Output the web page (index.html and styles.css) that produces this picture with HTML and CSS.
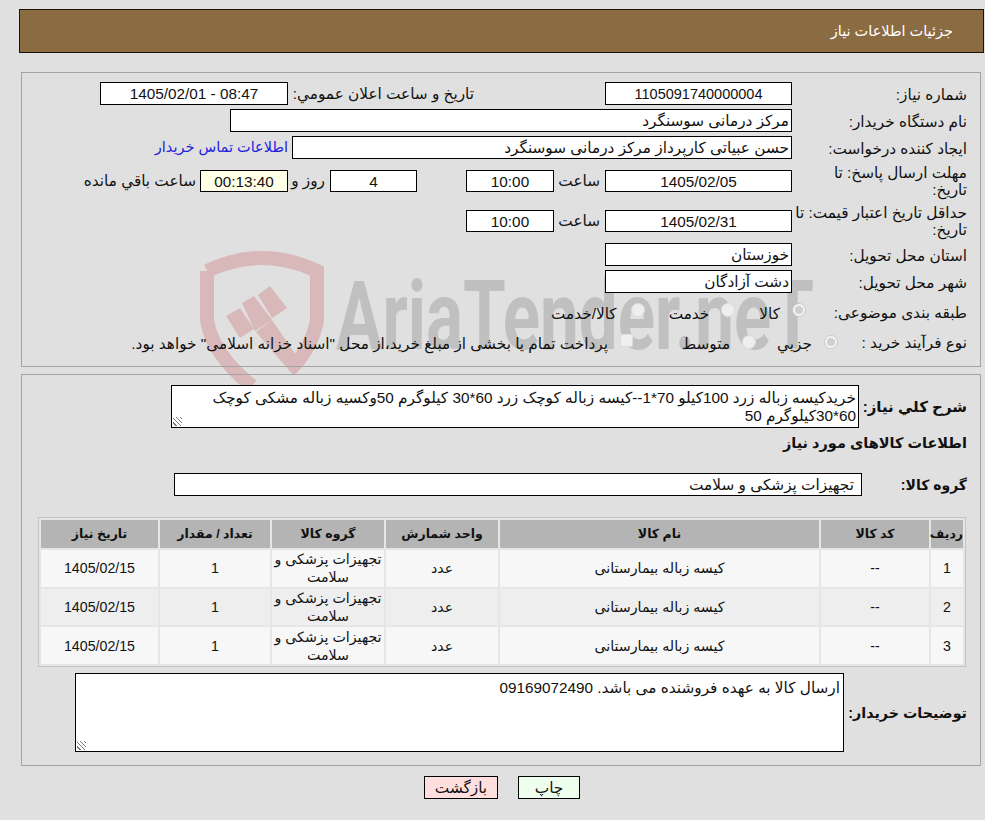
FILE: index.html
```html
<!DOCTYPE html>
<html lang="fa" dir="rtl">
<head>
<meta charset="utf-8">
<title>جزئیات اطلاعات نیاز</title>
<link rel="stylesheet" href="styles.css">
</head>
<body>
<div class="page">
  <div class="watermark" aria-hidden="true">
    <svg class="shield" viewBox="0 0 124 140" width="124" height="140">
      <path class="sh-line" d="M7 21 Q62 -5 117 21 L117 70 Q112 98 90 120"/>
      <path class="sh-line" d="M7 21 L7 70 Q12 104 52 136"/>
      <path class="sh-fill" d="M26 66 L40 58 L54 79 L40 88 Z M42 53 L54 46 L72 70 L55 81 Z M58 45 L70 36 L87 58 L72 68 Z M72 70 L98 108 L93 125 L56 82 Z"/>
    </svg>
    <span class="wm-text">AriaTender.neT</span>
  </div>

  <header class="title-bar">جزئیات اطلاعات نیاز</header>

  <section class="panel panel-top">
    <div class="row">
      <div class="label">شماره نیاز:</div>
      <div class="field f-date center num">1105091740000004</div>
      <div class="label-inline l-announce">تاریخ و ساعت اعلان عمومي:</div>
      <div class="field f-date f-wide center">08:47 - 1405/02/01</div>
    </div>
    <div class="row">
      <div class="label">نام دستگاه خریدار:</div>
      <div class="field f-buyer">مرکز درمانی سوسنگرد</div>
    </div>
    <div class="row">
      <div class="label">ایجاد کننده درخواست:</div>
      <div class="field f-creator">حسن عبیاتی کارپرداز مرکز درمانی سوسنگرد</div>
      <a class="contact" href="#">اطلاعات تماس خریدار</a>
    </div>
    <div class="row row-tall">
      <div class="label">مهلت ارسال پاسخ: تا<br>تاریخ:</div>
      <div class="field f-date center">1405/02/05</div>
      <div class="label-inline l-hour">ساعت</div>
      <div class="field f-small center">10:00</div>
      <div class="field f-small center f-days">4</div>
      <div class="label-inline l-day">روز و</div>
      <div class="field f-small center f-timer">00:13:40</div>
      <div class="label-inline l-left">ساعت باقي مانده</div>
    </div>
    <div class="row row-tall">
      <div class="label">حداقل تاریخ اعتبار قیمت: تا<br>تاریخ:</div>
      <div class="field f-date center">1405/02/31</div>
      <div class="label-inline l-hour">ساعت</div>
      <div class="field f-small center">10:00</div>
    </div>
    <div class="row">
      <div class="label">استان محل تحویل:</div>
      <div class="field f-date">خوزستان</div>
    </div>
    <div class="row">
      <div class="label">شهر محل تحویل:</div>
      <div class="field f-date">دشت آزادگان</div>
    </div>
    <div class="row row-radio">
      <div class="label">طبقه بندی موضوعی:</div>
      <div class="radios radios-cat">
        <span class="radio on"></span><span class="r-text">کالا</span>
        <span class="radio"></span><span class="r-text">خدمت</span>
        <span class="radio"></span><span class="r-text r-cat-last">کالا/خدمت</span>
      </div>
    </div>
    <div class="row row-radio">
      <div class="label">نوع فرآیند خرید :</div>
      <div class="radios radios-proc">
        <span class="radio on"></span><span class="r-text">جزیي</span>
        <span class="radio"></span><span class="r-text">متوسط</span>
        <span class="check"></span>
        <span class="r-text r-last">پرداخت تمام یا بخشی از مبلغ خرید،از محل "اسناد خزانه اسلامی" خواهد بود.</span>
      </div>
    </div>
  </section>

  <section class="panel panel-bottom">
    <div class="desc-row">
      <div class="label-b l-desc">شرح کلي نیاز:</div>
      <div class="field area area-desc">خریدکیسه زباله زرد 100کیلو 70*1--کیسه زباله کوچک زرد 60*30 کیلوگرم 50وکسیه زباله مشکی کوچک 60*30کیلوگرم 50<span class="grip"></span></div>
    </div>
    <h2 class="sub">اطلاعات کالاهای مورد نیاز</h2>
    <div class="group-row">
      <div class="label-b l-group">گروه کالا:</div>
      <div class="field f-group">تجهیزات پزشکی و سلامت</div>
    </div>
    <table class="items">
      <colgroup>
        <col class="c1"><col class="c2"><col class="c3"><col class="c4"><col class="c5"><col class="c6"><col class="c7">
      </colgroup>
      <thead>
        <tr><th>ردیف</th><th>کد کالا</th><th>نام کالا</th><th>واحد شمارش</th><th>گروه کالا</th><th>تعداد / مقدار</th><th>تاریخ نیاز</th></tr>
      </thead>
      <tbody>
        <tr><td>1</td><td>--</td><td>کیسه زباله بیمارستانی</td><td>عدد</td><td>تجهیزات پزشکی و سلامت</td><td>1</td><td>1405/02/15</td></tr>
        <tr><td>2</td><td>--</td><td>کیسه زباله بیمارستانی</td><td>عدد</td><td>تجهیزات پزشکی و سلامت</td><td>1</td><td>1405/02/15</td></tr>
        <tr><td>3</td><td>--</td><td>کیسه زباله بیمارستانی</td><td>عدد</td><td>تجهیزات پزشکی و سلامت</td><td>1</td><td>1405/02/15</td></tr>
      </tbody>
    </table>
    <div class="note-row">
      <div class="label-b l-note">توضیحات خریدار:</div>
      <div class="field area area-note">ارسال کالا به عهده فروشنده می باشد. 09169072490<span class="grip"></span></div>
    </div>
  </section>

  <div class="actions">
    <button class="btn btn-print" type="button">چاپ</button>
    <button class="btn btn-back" type="button">بازگشت</button>
  </div>
</div>
</body>
</html>
```
FILE: styles.css
```css
* { box-sizing: border-box; }
html, body { margin: 0; padding: 0; }
body {
  background: #e0e0e0;
  color: #111;
  font-family: "Liberation Sans", "DejaVu Sans", sans-serif;
  font-size: 15.3px;
  line-height: 17px;
  width: 985px;
  height: 820px;
  overflow: hidden;
}
.page { position: relative; height: 820px; padding-top: 9px; }
.watermark { position: absolute; left: 200px; top: 250px; width: 600px; height: 140px; direction: ltr; }
.shield { position: absolute; left: 0; top: 0; }
.sh-line { fill: none; stroke: #d8b8b8; stroke-width: 14; }
.sh-fill { fill: #d8b8b8; }
.wm-text {
  position: absolute; left: 136px; top: 6px;
  font: bold 96px/120px "Roboto", sans-serif;
  color: #c0c0c0; white-space: nowrap;
  transform-origin: left center;
  transform: scaleX(.72);
}
.title-bar {
  position: relative;
  height: 44px;
  margin-right: 1px;
  margin-left: 19px;
  background: #8b6b42;
  border: 1px solid #1a1208;
  color: #fff;
  font-size: 14.5px;
  line-height: 42px;
  padding-right: 30px;
}
.panel { position: relative; border: 1px solid #a3a3a3; margin-left: 21px; margin-right: 4px; }
.panel-top { height: 295px; margin-top: 19px; padding: 9px 13px 0 0; }
.panel-bottom { height: 392px; margin-top: 7px; padding: 10px 13px 0 0; }
.row { display: flex; align-items: center; height: 23px; margin-bottom: 4px; }
.row-tall { height: 35px; margin-bottom: 5px; }
.row-tall .field { height: 22px; line-height: 21px; }
.row-radio { height: 22px; margin-top: 8px; margin-bottom: 0; }
.label { width: 175px; flex: none; padding-top: 1px; }
.field {
  background: #fff; border: 1px solid #000; height: 23px; line-height: 22px;
  padding: 0 2px; flex: none; white-space: nowrap;
}
.center { text-align: center; }
.num { font-size: 14.5px; }
.f-date { width: 187px; }
.f-wide { width: 188px; }
.f-buyer { width: 562px; }
.f-creator { width: 500px; }
.f-small { width: 88px; }
.contact { color: #2222dd; text-decoration: none; margin-right: 4px; font-size: 14.5px; }
.label-inline { flex: none; white-space: nowrap; }
.l-announce { width: 317px; padding-right: 131px; }
.l-hour { width: 51px; padding-right: 5px; }
.f-days { margin-right: 49px; width: 87px; }
.l-day { width: 42px; padding-right: 5px; }
.f-timer { background: #ffffe8; }
.l-left { padding-right: 4px; }
.radios { display: flex; align-items: center; white-space: nowrap; }
.radio { width: 14px; height: 14px; border-radius: 50%; background: #eeeeee; border: 1px solid #dedede; flex: none; position: relative; top: -2px; }
.radio.on { background: #f4f4f4; border-color: #c8c8c8; }
.radio.on::after { content: ""; position: absolute; inset: 2px; border-radius: 50%; background: #cfcfcf; }
.check { width: 13px; height: 13px; border-radius: 2px; background: #efefef; border: 1px solid #dedede; flex: none; position: relative; top: -2px; margin-right: 28px; }
.r-text { margin-right: 12px; margin-left: 24px; position: relative; top: 1px; }
.r-cat-last { margin-right: 14px; }
.r-last { margin-left: 0; }
.radios-cat { margin-right: -14px; }
.radios-proc { margin-right: -46px; }
.radios-proc .r-text { margin-left: 21px; }
.radios-proc .r-last { margin-left: 0; }
.radios-proc .radio { top: 0; }
.label-b { font-weight: bold; flex: none; white-space: nowrap; font-size: 14.5px; }
.desc-row { display: flex; align-items: center; height: 43px; }
.l-desc { width: 108px; font-size: 15px; }
.area { position: relative; white-space: normal; }
.area-desc { width: 688px; height: 43px; line-height: 18px; padding: 3px 2px 0; overflow: hidden; }
.area-note { width: 769px; height: 79px; padding: 3px; }
.grip { position: absolute; left: 1px; bottom: 1px; width: 9px; height: 9px;
  background: repeating-linear-gradient(45deg, transparent 0 2px, #777 2px 3px); }
.sub { font-size: 14.5px; line-height: 17px; margin: 7px 0 0; font-weight: bold; }
.group-row { display: flex; align-items: center; margin-top: 21px; height: 23px; }
.l-group { width: 105px; font-size: 14px; padding-top: 1px; }
.f-group { width: 688px; padding-right: 7px; }
.items {
  border-collapse: separate; border-spacing: 2px; background: #e6e6e6; border: 1px solid #c4c4c4;
  width: 928px; table-layout: fixed; margin: 21px 1px 0 0; text-align: center;
  font-size: 14.2px;
}
.items th { background: #b4b4b4; height: 28px; padding: 0; font-weight: bold; font-size: 12.5px; }
.items td { background: #f7f7f7; padding: 0; height: 36.67px; line-height: 18px; }
.items tbody tr:nth-child(2) td { background: #eeeeee; }
.c1 { width: 32px; } .c2 { width: 108px; } .c3 { width: 319px; } .c4 { width: 112px; }
.c5 { width: 112px; } .c6 { width: 110px; } .c7 { width: 117px; }
.note-row { display: flex; align-items: center; margin-top: 6px; }
.l-note { width: 123px; font-size: 14.3px; padding-top: 3px; }
.actions { display: flex; justify-content: center; gap: 20px; margin: 10px 0 0 0; padding-left: 19px; }
.btn { height: 23px; border: 1px solid #000; font: inherit; color: #111; padding: 0; line-height: 20px; }
.btn-print { width: 62px; background: #eeffee; }
.btn-back { width: 74px; background: #ffdede; }
```
